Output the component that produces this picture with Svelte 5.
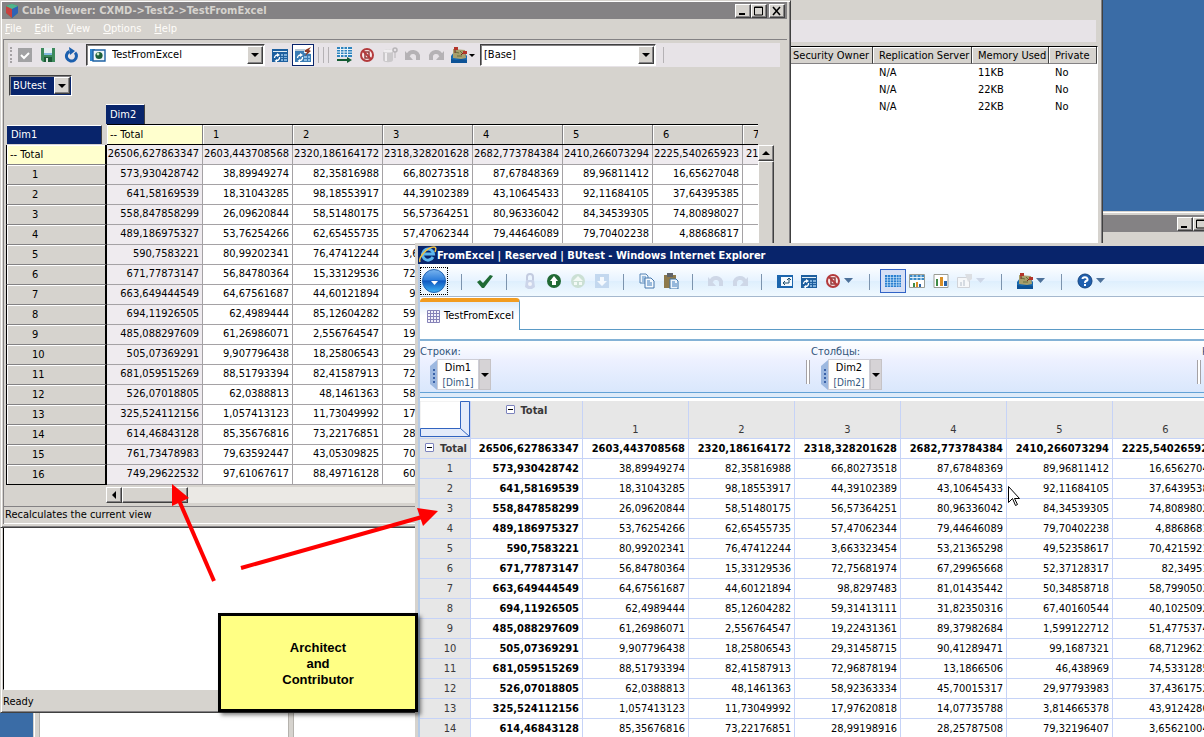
<script>
  const rows = [
    ['26506,627863347', '2603,443708568', '2320,186164172', '2318,328201628', '2682,773784384', '2410,266073294', '2225,540265923'],
    ['573,930428742', '38,89949274', '82,35816988', '66,80273518', '87,67848369', '89,96811412', '16,65627048'],
    ['641,58169539', '18,31043285', '98,18553917', '44,39102389', '43,10645433', '92,11684105', '37,64395385'],
    ['558,847858299', '26,09620844', '58,51480175', '56,57364251', '80,96336042', '84,34539305', '74,80898027'],
    ['489,186975327', '53,76254266', '62,65455735', '57,47062344', '79,44646089', '79,70402238', '4,88686817'],
    ['590,7583221', '80,99202341', '76,47412244', '3,663323454', '53,21365298', '49,52358617', '70,42159214'],
    ['671,77873147', '56,84780364', '15,33129536', '72,75681974', '67,29965668', '52,37128317', '82,349517'],
    ['663,649444549', '64,67561687', '44,60121894', '98,8297483', '81,01435442', '50,34858718', '58,79905031'],
    ['694,11926505', '62,4989444', '85,12604282', '59,31413111', '31,82350316', '67,40160544', '40,10250926'],
    ['485,088297609', '61,26986071', '2,556764547', '19,22431361', '89,37982684', '1,599122712', '51,47753742'],
    ['505,07369291', '9,907796438', '18,25806543', '29,31458715', '90,41289471', '99,1687321', '68,71296215'],
    ['681,059515269', '88,51793394', '82,41587913', '72,96878194', '13,1866506', '46,438969', '74,53312851'],
    ['526,07018805', '62,0388813', '48,1461363', '58,92363334', '45,70015317', '29,97793983', '37,43617529'],
    ['325,524112156', '1,057413123', '11,73049992', '17,97620818', '14,07735788', '3,814665378', '43,91242864'],
    ['614,46843128', '85,35676816', '73,22176851', '28,99198916', '28,25787508', '79,32196407', '3,656210047'],
    ['761,73478983', '79,63592447', '43,05309825', '70,18264935', '', '', ''],
    ['749,29622532', '97,61067617', '88,49716128', '60,93518472', '', '', '']
  ];

  const menus = ['File', 'Edit', 'View', 'Options', 'Help'];

  const servers = [
    { replication: 'N/A', memory: '11KB', priv: 'No' },
    { replication: 'N/A', memory: '22KB', priv: 'No' },
    { replication: 'N/A', memory: '22KB', priv: 'No' }
  ];

  const viewerTools = [
    { icon: 'sheet', label: 'Submit view' },
    { icon: 'stop', label: 'Stop' },
    { icon: 'cylinder', label: 'Data', off: true },
    { icon: 'undo', label: 'Undo', off: true },
    { icon: 'redo', label: 'Redo', off: true }
  ];

  const webGroups = [
    [{ icon: 'tick', label: 'Commit' }],
    [
      { icon: 'lock', label: 'Lock', off: true },
      { icon: 'up', label: 'Take ownership' },
      { icon: 'bounce', label: 'Bounce', off: true },
      { icon: 'down', label: 'Release', off: true }
    ],
    [
      { icon: 'copy', label: 'Copy' },
      { icon: 'paste', label: 'Paste' }
    ],
    [
      { icon: 'undo', label: 'Undo', off: true },
      { icon: 'redo', label: 'Redo', off: true }
    ],
    [
      { icon: 'swap', label: 'Reset view' },
      { icon: 'recalc', label: 'Recalculate' },
      { icon: 'stop', label: 'Suppress zeroes', drop: true }
    ],
    [
      { icon: 'grid', label: 'Grid', active: true },
      { icon: 'gridchart', label: 'Grid and chart' },
      { icon: 'chart', label: 'Chart' },
      { icon: 'charttype', label: 'Chart type', off: true, drop: true }
    ],
    [{ icon: 'map', label: 'Sandbox', drop: true }],
    [{ icon: 'help', label: 'Help', drop: true }]
  ];

  const axes = [
    { title: 'Строки:', dim: 'Dim1' },
    { title: 'Столбцы:', dim: 'Dim2' },
    { title: 'Контекст:', dim: 'BUtest' }
  ];
</script>

{#snippet icon(name)}
  <svg class="icon" viewBox="0 0 16 16" width="16" height="16" aria-hidden="true">
    {#if name === 'save-check'}
      <path d="M1 1h14v14H1z" fill="#a2a2a4" />
      <path d="M4 8l3 3 5-5" stroke="#fff" stroke-width="2" fill="none" />
    {:else if name === 'save'}
      <path d="M1 1h14v14H3l-2-2z" fill="#3d8a5c" />
      <path d="M4 1h8v7H4z" fill="#e4eef0" />
      <path d="M4 10h8v5H4z" fill="#1d5b38" />
      <path d="M6 11h2v4H6z" fill="#dce8e0" />
      <path d="M4 6h8v2H4z" fill="#7fb7dd" />
    {:else if name === 'refresh'}
      <path d="M12 5.6A5 5 0 1 1 6.5 4.5" fill="none" stroke="#1b5fae" stroke-width="3" />
      <path d="M6 0l6 4-5 4z" fill="#1b5fae" />
    {:else if name === 'view'}
      <path d="M0 2h5v12H0z" fill="#2f86cf" />
      <path d="M3 3h12v11H3z" fill="#eef6fa" stroke="#1f62a4" stroke-width="1.4" />
      <circle cx="9" cy="8.5" r="3.6" fill="#1c5f37" />
      <circle cx="8" cy="7" r="1.4" fill="#cfe8c8" />
    {:else if name === 'recalc'}
      <path d="M0 2h16v13H0z" fill="#1d5f9f" />
      <path d="M1 4h14v1H1z" fill="#e3eef4" />
      <path d="M9 7h2v2H9zM12 7h3v2h-3zM9 10h2v1H9zM12 10h3v1h-3zM9 12h2v2H9zM12 12h3v2h-3z" fill="#7fb0da" />
      <path d="M2.500 11a3 3 0 0 1 3-3M7.500 10a3 3 0 0 1-3 3.500" fill="none" stroke="#fff" stroke-width="1.300" />
      <path d="M5 6l3 2-3 2zM5 12v3.500L2.500 14z" fill="#fff" />
    {:else if name === 'autocalc'}
      <path d="M0 2h10l-1 4 7 1v8H0z" fill="#3a7cb4" />
      <path d="M0 2h10v2H0z" fill="#b9cbd8" />
      <path d="M9 9h3v2H9zM13 9h2v2h-2zM9 12h3v2H9zM13 12h2v2h-2z" fill="#8fbde2" />
      <path d="M2.500 11a3 3 0 0 1 3-3M7.500 10a3 3 0 0 1-3 3.500" fill="none" stroke="#fff" stroke-width="1.300" />
      <path d="M5 6l3 2-3 2zM5 12v3.500L2.500 14z" fill="#fff" />
      <path d="M16 0l-6 3v2l2 0-2 4 6-5-2-1z" fill="#8f3b26" />
    {:else if name === 'sheet'}
      <path d="M1 0h15v10H1z" fill="#2e83bd" />
      <path d="M1 2.5h15M1 5h15M1 7.500h15M4.500 0v10M8 0v10M11.500 0v10" stroke="#e8f3fa" stroke-width="1" />
      <path d="M1 13h11" stroke="#135b33" stroke-width="2" />
      <path d="M11 10l5 3-5 3z" fill="#135b33" />
    {:else if name === 'stop'}
      <circle cx="8" cy="8" r="6" fill="#fbeaea" stroke="#b33a3c" stroke-width="2" />
      <path d="M6 5h4v6H6z" fill="none" stroke="#8f3b3b" stroke-width="1.500" />
      <path d="M4 4l8 8" stroke="#b33a3c" stroke-width="2" />
    {:else if name === 'cylinder'}
      <path d="M1 4c0-2 10-2 10 0v9c0 3-10 3-10 0z" fill="#cbc9cb" />
      <path d="M3 6h2v8H3z" fill="#efedef" />
      <ellipse cx="6" cy="4" rx="5" ry="1.500" fill="#efedef" />
      <circle cx="13" cy="3" r="2" fill="none" stroke="#b7b5b7" stroke-width="1.500" />
      <path d="M13 5v6" stroke="#b7b5b7" />
    {:else if name === 'undo'}
      <path d="M3 9a5 4.500 0 0 1 10 1v3" fill="none" stroke="currentColor" stroke-width="4" />
      <path d="M0 4v9h8z" fill="currentColor" />
    {:else if name === 'redo'}
      <path d="M13 9a5 4.500 0 0 0-10 1v3" fill="none" stroke="currentColor" stroke-width="4" />
      <path d="M16 4v9H8z" fill="currentColor" />
    {:else if name === 'map'}
      <path d="M0 9l3-4h10l3 4v7H0z" fill="#1669b0" />
      <path d="M0 12l5 1 5-1 6 1v3H0z" fill="#0d5296" />
      <path d="M2 2l12 1 1 8-5 1-8-1z" fill="#a89f6c" />
      <path d="M4 5l4 1M6 9h5M9 4l2 2" stroke="#67703f" />
      <path d="M3 0h4v3H3zM12 4h4v3h-4z" fill="#b33429" />
      <path d="M4 3v3M12 6l-2 2" stroke="#7b241c" />
    {:else if name === 'tick'}
      <path d="M0 9l3-2 3 3 7-8 3 1-9 12H5z" fill="#1f6b35" />
    {:else if name === 'lock'}
      <path d="M5 7V4a3 3 0 0 1 6 0v3" fill="none" stroke="#c3cbe0" stroke-width="2" />
      <path d="M4 7h8l1 7-3 2H6l-3-2z" fill="#ccd5ea" />
      <circle cx="8" cy="11" r="2" fill="#f2f5fb" />
    {:else if name === 'up'}
      <circle cx="8" cy="8" r="7" fill="#216a35" />
      <path d="M8 3l4 5h-2v4H6V8H4z" fill="#fff" />
    {:else if name === 'bounce'}
      <circle cx="8" cy="8" r="7" fill="#cbe0d4" />
      <path d="M8 3l5 5H3zM4 9h3v3H4zM9 9h3v3H9z" fill="#f3faf6" />
    {:else if name === 'down'}
      <path d="M1 1h14v14H1z" fill="#c3d8ef" />
      <path d="M6 4h4v4h3l-5 5-5-5h3z" fill="#f4f9fe" />
    {:else if name === 'copy'}
      <path d="M1 1h6l2 2v7H1z" fill="#eef5fb" stroke="#5685b6" />
      <path d="M3 4h4M3 6h4M3 8h3" stroke="#4a86c2" />
      <path d="M6 5h6l3 3v7H6z" fill="#f4f9fd" stroke="#4577ac" />
      <path d="M8 8h3M8 10h5M8 12h5" stroke="#3f7cbd" />
    {:else if name === 'paste'}
      <path d="M1 2h12v13H1z" fill="#8d7a4c" />
      <path d="M4 0h6v4H4z" fill="#5f6368" />
      <path d="M7 6h6l2 2v8H7z" fill="#edf4fb" stroke="#3d74ab" />
      <path d="M9 9h3M9 11h5M9 13h5" stroke="#3f7cbd" />
    {:else if name === 'swap'}
      <path d="M0 2h16v13H0z" fill="#1c66ae" />
      <path d="M4 4h11v9H4z" fill="#f6fbff" />
      <path d="M12 5v5H6M8 8l-2 2 2 2M10 7l2-2 2 2" fill="none" stroke="#1d4f6e" />
    {:else if name === 'grid'}
      <path d="M0 2h16v12H0z" fill="#2b7fd0" />
      <path d="M0 4.500h16M0 7h16M0 9.500h16M0 12h16M2.500 2v12M5.500 2v12M8.500 2v12M11.500 2v12M14 2v12" stroke="#d8ecfb" stroke-width=".6" />
    {:else if name === 'gridchart'}
      <path d="M.5 1.500h15v13H.5z" fill="#fff" stroke="#9a9c94" />
      <path d="M1 2h14v5H1z" fill="#3a8ac6" />
      <path d="M1 4.500h14M4 2v5M8 2v5M12 2v5" stroke="#e3f1fa" />
      <path d="M4 10h2v4H4z" fill="#3e8b46" />
      <path d="M7 9h2v5H7z" fill="#d98f25" />
      <path d="M10 11h2v3h-2z" fill="#2964a8" />
    {:else if name === 'chart'}
      <path d="M1 1.500h14v13H1z" fill="#fff" stroke="#9a9c94" />
      <path d="M3 6h2v7H3z" fill="#3e8b46" />
      <path d="M7 4h3v9H7z" fill="#d98f25" />
      <path d="M11 8h3v5h-3z" fill="#2964a8" />
    {:else if name === 'charttype'}
      <path d="M.5 4.500h12v10H.5z" fill="#f6f8fa" stroke="#d0d3d8" />
      <path d="M3 9h2v4H3zM6 7h2v6H6z" fill="#d5dbe2" />
      <path d="M8 1h7v5l-4 3z" fill="#dcdfe3" />
    {:else if name === 'help'}
      <circle cx="8" cy="8" r="7" fill="#1f5fae" stroke="#154580" />
      <path d="M5.500 6a2.500 2 0 1 1 3.500 2q-1 .5-1 2M8 11v2" fill="none" stroke="#fff" stroke-width="2" />
    {/if}
  </svg>
{/snippet}

{#snippet caret()}
  <svg class="caret" viewBox="0 0 9 5" width="9" height="5" aria-hidden="true"><path d="M0 0h9L4.500 5z" fill="currentColor" /></svg>
{/snippet}

{#snippet winButton(kind)}
  <button class="win-btn raised" aria-label={kind}>
    <svg viewBox="0 0 12 10" width="12" height="10" aria-hidden="true">
      {#if kind === 'Minimize'}
        <path d="M2 8h6" stroke="#000" stroke-width="2" />
      {:else if kind === 'Maximize'}
        <path d="M1.500 1v8h8V1zM1 1.500h9" fill="none" stroke="#000" />
      {:else}
        <path d="M2 1l7 8M9 1L2 9" stroke="#000" stroke-width="1.600" />
      {/if}
    </svg>
  </button>
{/snippet}

<div class="desktop">
  <section class="window back-window" aria-label="Background window">
    <header class="titlebar">
      <span class="win-title"></span>
      {@render winButton('Minimize')}
      {@render winButton('Maximize')}
      {@render winButton('Close')}
    </header>
    <div class="panes">
      <div class="pane tree"></div>
      <div class="pane list"></div>
    </div>
  </section>

  <section class="window architect" aria-label="Architect">
    <div class="arch-tools"></div>
    <div class="arch-list">
      <table>
        <colgroup><col class="owner" /><col class="repl" /><col class="mem" /><col class="priv" /></colgroup>
        <thead>
          <tr><th>Security Owner</th><th>Replication Server</th><th>Memory Used</th><th>Private</th></tr>
        </thead>
        <tbody>
          {#each servers as s}
            <tr><td></td><td>{s.replication}</td><td>{s.memory}</td><td>{s.priv}</td></tr>
          {/each}
        </tbody>
      </table>
    </div>
    <footer class="arch-status">Ready</footer>
  </section>

  <section class="window viewer" aria-label="Cube Viewer">
    <header class="titlebar">
      <svg viewBox="0 0 16 16" width="16" height="16" aria-hidden="true">
        <path d="M8 1l6 2v7l-6 5-6-5V3z" fill="#2d9e63" />
        <path d="M2 3l6 2v10l-6-5z" fill="#c8413f" />
        <path d="M8 5l6-2v7l-6 5z" fill="#2f62b5" />
        <path d="M2 3l6-2 6 2-6 3z" fill="#4fb58c" />
      </svg>
      <span class="win-title">Cube Viewer: CXMD->Test2->TestFromExcel</span>
      {@render winButton('Minimize')}
      {@render winButton('Maximize')}
      <span class="gap"></span>
      {@render winButton('Close')}
    </header>
    <nav class="menu">
      {#each menus as m}
        <button><u>{m[0]}</u>{m.slice(1)}</button>
      {/each}
    </nav>

    <div class="viewer-body">
      <div class="viewer-tools">
        <span class="grip"></span>
        <button class="tool" aria-label="Commit">{@render icon('save-check')}</button>
        <button class="tool" aria-label="Save">{@render icon('save')}</button>
        <button class="tool" aria-label="Recalculate">{@render icon('refresh')}</button>
        <div class="combo view-combo">
          {@render icon('view')}
          <select aria-label="View"><option>TestFromExcel</option></select>
          <span class="combo-arrow raised"><i></i></span>
        </div>
        <button class="tool" aria-label="Recalculate view">{@render icon('recalc')}</button>
        <button class="tool pressed" aria-label="Automatic recalculate">{@render icon('autocalc')}</button>
        <span class="bars"><i></i><i></i><i></i></span>
        {#each viewerTools as t}
          <button class="tool" class:off={t.off} aria-label={t.label}>{@render icon(t.icon)}</button>
        {/each}
        <button class="tool map-tool" aria-label="Sandbox">{@render icon('map')}<i class="tri"></i></button>
        <div class="combo base-combo">
          <select aria-label="Sandbox name"><option>[Base]</option></select>
          <span class="combo-arrow raised"><i></i></span>
        </div>
        <span class="bars"><i></i></span>
      </div>

      <div class="combo title-dim">
        <select aria-label="BUtest"><option>BUtest</option></select>
        <span class="combo-arrow raised"><i></i></span>
      </div>

      <button class="dim-btn col-dim">Dim2</button>

      <div class="grid-area">
        <div class="grid-clip">
          <table class="cube">
            <colgroup><col class="head" /><col class="total" />{#each Array(7) as _}<col class="num" />{/each}</colgroup>
            <thead>
              <tr>
                <th class="corner"><button class="dim-btn">Dim1</button></th>
                <th class="yellow">-- Total</th>
                {#each Array(7) as _, i}<th>{i + 1}</th>{/each}
              </tr>
            </thead>
            <tbody>
              {#each rows as row, r}
                <tr class:sum={r === 0}>
                  <th class:yellow={r === 0}>{r === 0 ? '-- Total' : r}</th>
                  {#each row as value}<td>{value}</td>{/each}
                  <td class="cut">{r === 0 ? '21' : ''}</td>
                </tr>
              {/each}
            </tbody>
          </table>
        </div>
        <div class="vscroll">
          <button class="raised" aria-label="Scroll up"><i class="arrow-up"></i></button>
          <span class="thumb raised"></span>
        </div>
      </div>
      <div class="hscroll">
        <button class="raised" aria-label="Scroll left"><i class="arrow-left"></i></button>
        <span class="thumb raised"></span>
      </div>
      <footer class="viewer-status">Recalculates the current view</footer>
    </div>
  </section>

  <section class="browser" aria-label="Windows Internet Explorer">
    <header class="ie-title">
      <svg viewBox="0 0 18 18" width="18" height="18" aria-hidden="true">
        <path d="M14 11a5.500 5.500 0 1 1 .5-3H5" fill="none" stroke="#5cb6ee" stroke-width="3" />
        <path d="M1 16C-1 12 8 1 15 1q3 0 1 5" fill="none" stroke="#f0c040" stroke-width="1.500" />
      </svg>
      <span>FromExcel | Reserved | BUtest - Windows Internet Explorer</span>
    </header>

    <div class="web-tools">
      <button class="orb" aria-label="Menu">
        <svg viewBox="0 0 24 24" width="24" height="24" aria-hidden="true">
          <defs>
            <linearGradient id="orb" x1="0" y1="0" x2="0" y2="1">
              <stop offset="0" stop-color="#79b4ee" />
              <stop offset=".45" stop-color="#2f7fdc" />
              <stop offset=".5" stop-color="#0f58c0" />
              <stop offset="1" stop-color="#3fb4f6" />
            </linearGradient>
          </defs>
          <circle cx="12" cy="12" r="11.500" fill="url(#orb)" stroke="#2566b4" />
          <path d="M9 12h7l-3.500 4z" fill="#fff" />
        </svg>
      </button>
      {#each webGroups as group}
        <span class="sep"></span>
        {#each group as t}
          <button class="tool" class:off={t.off} class:active={t.active} class:drop={t.drop} aria-label={t.label}>
            {@render icon(t.icon)}{#if t.drop}{@render caret()}{/if}
          </button>
        {/each}
      {/each}
    </div>

    <div class="tabs">
      <button class="tab">
        <svg viewBox="0 0 13 13" width="13" height="13" aria-hidden="true">
          <path d="M.5.5h12v12H.5zM.5 3.500h12M.5 6.500h12M.5 9.500h12M3.500.5v12M6.500.5v12M9.500.5v12" fill="#f4f2fb" stroke="#8683b8" />
        </svg>
        TestFromExcel
      </button>
    </div>

    <div class="axes">
      {#each axes as axis}
        <div class="axis">
          <span class="axis-title">{axis.title}</span>
          <div class="axis-item">
            <svg viewBox="0 0 7 30" width="7" height="30" aria-hidden="true">
              <path d="M7 0v30L0 24V6z" fill="#9db8e0" />
              <path d="M3 9h2v2H3zM3 13h2v2H3zM3 17h2v2H3zM3 21h2v2H3z" fill="#3a62a8" />
            </svg>
            <div class="axis-name"><span>{axis.dim}</span><small>[{axis.dim}]</small></div>
            <button aria-label="{axis.dim} subset"><i class="arrow-down"></i></button>
          </div>
          <span class="splitter"></span>
        </div>
      {/each}
    </div>
    <div class="axes-edge"></div>

    <table class="web-grid">
      <colgroup><col class="head" /><col class="total" />{#each Array(6) as _}<col class="num" />{/each}</colgroup>
      <thead>
        <tr>
          <th class="corner">
            <svg viewBox="0 0 50 37" width="50" height="37" aria-hidden="true">
              <path d="M.5.5h40v27H.5z" fill="#fff" />
              <path d="M40.500.5h9v35H.5v-8h40z" fill="#e4ebfa" stroke="#3264c0" />
              <path d="M40.500 27.500l9 8" stroke="#3264c0" />
            </svg>
          </th>
          <th class="top"><button class="minus" aria-label="Collapse Total"></button>Total</th>
          {#each Array(6) as _, i}<th>{i + 1}</th>{/each}
        </tr>
      </thead>
      <tbody>
        {#each rows.slice(0, 15) as row, r}
          <tr class:sum={r === 0}>
            <th>{#if r === 0}<button class="minus" aria-label="Collapse row Total"></button>Total{:else}{r}{/if}</th>
            {#each row as value}<td>{value}</td>{/each}
          </tr>
        {/each}
      </tbody>
    </table>
  </section>

  <svg class="arrows" viewBox="0 0 280 110" width="280" height="110" aria-hidden="true">
    <g stroke="#f00" stroke-width="4" fill="none">
      <path d="M54 101L18 18" />
      <path d="M81 88L262 37" />
    </g>
    <path d="M12 4l17 14-17 8zM278 31l-21-3 6 18z" fill="#f00" />
  </svg>

  <aside class="callout">Architect<br />and<br />Contributor</aside>

  <svg class="cursor" viewBox="0 0 12 21" width="12" height="21" aria-hidden="true">
    <path d="M.5.5v16l4-4 3 7 2-1-3-6h5z" fill="#fff" stroke="#000" />
  </svg>
</div>

<style>
  :global(body) {
    margin: 0;
  }

  .desktop {
    position: relative;
    height: 100vh;
    overflow: hidden;
    background: #3a6ca6;
    font-family: 'DejaVu Sans Condensed', 'DejaVu Sans', Tahoma, sans-serif;
    font-size: 11px;
    line-height: 14px;
    color: #000;
  }

  button,
  select {
    font: inherit;
    color: inherit;
    margin: 0;
    padding: 0;
    border: 0;
    background: none;
    border-radius: 0;
  }

  svg {
    display: block;
    flex-shrink: 0;
  }

  table {
    border-collapse: separate;
    border-spacing: 0;
    table-layout: fixed;
  }

  th,
  td {
    box-sizing: border-box;
    padding: 0;
    font-weight: normal;
    white-space: nowrap;
    overflow: hidden;
  }

  /* ── Classic window chrome ── */
  .window {
    position: absolute;
    display: flex;
    flex-direction: column;
    box-sizing: border-box;
    background: #d6d3ce;
    border: 1px solid;
    border-color: #d6d3ce #404040 #404040 #d6d3ce;
    box-shadow: inset 1px 1px #fff, inset -1px -1px #848284;
  }

  .raised {
    box-sizing: border-box;
    background: #d6d3ce;
    border: 1px solid;
    border-color: #fff #404040 #404040 #fff;
    box-shadow: inset -1px -1px #848284;
  }

  .titlebar {
    display: flex;
    align-items: center;
    height: 17px;
    padding: 0 2px;
    background: #848284;
    color: #d6d3ce;
    font-weight: bold;
  }

  .win-title {
    flex: 1;
    padding-left: 2px;
    white-space: nowrap;
  }

  .win-btn {
    display: flex;
    align-items: center;
    justify-content: center;
    width: 16px;
    height: 14px;
  }

  .gap {
    width: 2px;
  }

  /* ── Window at the very back ── */
  .back-window {
    top: 211px;
    left: 33px;
    right: -27px;
    bottom: -20px;
    padding: 3px;
  }

  .panes {
    flex: 1;
    display: flex;
    gap: 4px;
    padding: 20px 2px 0;
  }

  .pane {
    background: #fff;
    border: 1px solid #b5b2ad;
  }

  .tree {
    width: 248px;
  }

  .list {
    flex: 1;
  }

  /* ── Architect ── */
  .architect {
    top: -2px;
    left: 0;
    right: 101px;
    height: 715px;
    padding: 21px 4px 0 2px;
  }

  .arch-tools {
    height: 22px;
    margin-right: 2px;
    background: #e7e3e7;
  }

  .arch-list {
    flex: 1;
    display: flex;
    justify-content: flex-end;
    align-items: flex-start;
    margin-top: 4px;
    border: 1px solid;
    border-color: #000 #fff #fff #000;
    background: #fff;
  }

  .arch-list table {
    width: 310px;
  }

  .arch-list th {
    height: 17px;
    padding: 1px 0 0 6px;
    text-align: left;
    background: #d6d3ce;
    border-right: 1px solid #404040;
    border-bottom: 1px solid #848284;
    box-shadow: inset 1px 1px #fff;
  }

  .arch-list td {
    height: 17px;
    padding-left: 6px;
  }

  .owner {
    width: 86px;
  }

  .repl {
    width: 99px;
  }

  .mem {
    width: 77px;
  }

  .priv {
    width: 48px;
  }

  .arch-status {
    height: 22px;
    line-height: 24px;
  }

  /* ── Cube viewer ── */
  .viewer {
    top: 0;
    left: 0;
    width: 791px;
    padding: 1px 3px 3px 1px;
  }

  .menu {
    display: flex;
    gap: 13px;
    height: 20px;
    padding-left: 3px;
    color: #fffdfa;
  }

  .viewer-body {
    border-top: 1px solid #848284;
    border-left: 1px solid #848284;
    margin-left: 1px;
    padding: 3px 0 0 2px;
  }

  .viewer-tools {
    display: flex;
    align-items: center;
    gap: 7px;
    height: 24px;
    margin: 0 7px 0 2px;
    padding-left: 2px;
    background: #e7e3e7;
  }

  .grip {
    width: 2px;
    height: 16px;
    margin-right: -4px;
    border-left: 2px dotted #a5a2a5;
  }

  .tool {
    position: relative;
    display: flex;
    align-items: center;
    flex-shrink: 0;
    width: 16px;
    color: #8c8c8c;
  }

  .viewer-tools .off {
    color: #b5b2b5;
  }

  .pressed {
    width: 22px;
    height: 22px;
    margin: 0 -3px;
    box-sizing: border-box;
    justify-content: center;
    background: #fff;
    border: 1px solid #08246b;
  }

  .bars {
    display: flex;
    gap: 4px;
    width: 11px;
  }

  .bars i {
    width: 1px;
    height: 16px;
    background: #b5b2b5;
  }

  .map-tool {
    width: 22px;
    gap: 2px;
  }

  .tri,
  .arrow-down,
  .combo-arrow i {
    flex-shrink: 0;
    border: 3px solid transparent;
    border-top: 3px solid #000;
    border-bottom: 0;
  }

  .combo-arrow i,
  .arrow-down {
    border-width: 4px 4px 0;
  }

  .combo {
    display: flex;
    align-items: center;
    box-sizing: border-box;
    flex-shrink: 0;
    height: 22px;
    padding: 1px;
    background: #fff;
    border: 1px solid;
    border-color: #404040 #fff #fff #404040;
    box-shadow: inset 1px 1px #848284;
  }

  .combo select {
    appearance: none;
    flex: 1;
    min-width: 0;
    height: 100%;
  }

  .combo-arrow {
    display: flex;
    align-items: center;
    justify-content: center;
    width: 16px;
    height: 100%;
    margin-left: -16px;
    pointer-events: none;
  }

  .view-combo {
    width: 179px;
    padding-left: 3px;
  }

  .view-combo select {
    padding-left: 6px;
  }

  .base-combo {
    width: 176px;
  }

  .base-combo select {
    padding-left: 2px;
  }

  .title-dim {
    width: 63px;
    height: 21px;
    margin: 8px 0 8px 3px;
    background: #08246b;
    color: #fff;
  }

  .title-dim select {
    padding-left: 2px;
  }

  .dim-btn {
    box-sizing: border-box;
    height: 19px;
    padding: 0 4px;
    text-align: left;
    color: #fff;
    background: #08246b;
    border-top: 1px solid #fff;
    border-right: 1px solid #404040;
  }

  .col-dim {
    display: block;
    height: 20px;
    width: 39px;
    margin-left: 100px;
  }

  .grid-area {
    display: flex;
    margin-right: 13px;
  }

  .grid-clip {
    flex: 1;
    min-width: 0;
    overflow: hidden;
    padding-bottom: 2px;
  }

  .cube {
    width: 827px;
  }

  .head {
    width: 101px;
  }

  .total {
    width: 96px;
  }

  .num {
    width: 90px;
  }

  .cube th {
    height: 20px;
    padding-top: 1px;
    text-align: left;
    background: #d6d3ce;
  }

  .cube thead th {
    height: 21px;
    padding-left: 10px;
    border: solid #000;
    border-width: 1px 0;
    box-shadow: inset -1px 0 #848284, inset 1px 1px #fff;
  }

  .cube thead .corner {
    padding: 0 5px 0 1px;
    border-color: transparent;
    box-shadow: none;
  }

  .corner .dim-btn {
    display: block;
    width: 95px;
  }

  .cube tbody th {
    padding-left: 25px;
    border-left: 1px solid #000;
    border-right: 2px solid #000;
    border-bottom: 1px solid #848284;
    box-shadow: inset 1px 1px #fff;
  }

  .cube tbody tr:last-child th {
    border-bottom-color: #000;
  }

  .cube thead .yellow,
  .cube tbody .yellow {
    padding-left: 3px;
    background: #ffffce;
  }

  .cube td {
    height: 20px;
    padding: 0 3px 2px 0;
    text-align: right;
    background: #fff;
    border-right: 1px solid #a5a2a5;
    border-bottom: 1px solid #a5a2a5;
  }

  .cube .sum td,
  .cube td:nth-child(2) {
    background: #efebef;
  }

  .cube .cut {
    padding-left: 3px;
    text-align: left;
  }

  .vscroll {
    width: 16px;
    margin-top: 21px;
    background: #ebe9e5;
  }

  .vscroll button,
  .hscroll button {
    display: flex;
    align-items: center;
    justify-content: center;
    width: 16px;
    height: 16px;
  }

  .vscroll .thumb {
    display: block;
    height: 200px;
  }

  .arrow-up {
    border: 4px solid transparent;
    border-top: 0;
    border-bottom-color: #000;
  }

  .arrow-left {
    border: 4px solid transparent;
    border-left: 0;
    border-right-color: #000;
  }

  .hscroll {
    display: flex;
    margin: 0 29px 0 100px;
    background: #ebe9e5;
  }

  .hscroll .thumb {
    width: 66px;
  }

  .viewer-status {
    height: 16px;
    margin: 3px 0 0 -2px;
    border-top: 1px solid #848284;
    border-bottom: 1px solid #fff;
    padding-left: 1px;
    line-height: 15px;
  }

  /* ── Browser window ── */
  .browser {
    position: absolute;
    top: 243px;
    left: 415px;
    right: 0;
    bottom: 0;
    overflow: hidden;
    background: #fff;
    border: solid #d6d3ce;
    border-width: 3px 0 0 3px;
    padding-left: 2px;
    box-shadow: inset 2px 0 #b5cbe7;
  }

  .ie-title {
    display: flex;
    align-items: center;
    height: 18px;
    margin-left: -2px;
    padding-left: 1px;
    background: #08246b;
    color: #fff;
    font-weight: bold;
    white-space: nowrap;
  }

  .ie-title span {
    padding-top: 1px;
  }

  .web-tools {
    display: flex;
    align-items: center;
    gap: 8px;
    height: 33px;
    background: linear-gradient(#fff, #e7f3ff 50%, #deeffd 52%, #f2faff);
    box-shadow: inset 0 -1px #a5b8ce;
  }

  .orb {
    display: flex;
    align-items: center;
    justify-content: center;
    flex-shrink: 0;
    box-sizing: border-box;
    width: 28px;
    height: 28px;
    border: 1px dotted #000;
  }

  .sep {
    flex-shrink: 0;
    width: 1px;
    height: 16px;
    margin: 2px 7px 0 5px;
    background: #7c94ae;
  }

  .web-tools .tool {
    color: #4d719a;
  }

  .web-tools .off {
    color: #ced7e7;
  }

  .web-tools .drop {
    width: 31px;
    gap: 3px;
  }

  .web-tools .active {
    justify-content: center;
    box-sizing: border-box;
    width: 26px;
    height: 24px;
    margin: 0 -5px;
    background: #d6dff5;
    border: 1px solid #3163c6;
  }

  .tabs {
    display: flex;
    height: 32px;
    padding-top: 1px;
    background: linear-gradient(#5a9ac6, #5a9ac6) 0 100% / 100% 1px no-repeat;
  }

  .tab {
    display: flex;
    align-items: center;
    gap: 4px;
    box-sizing: border-box;
    width: 100px;
    padding-left: 7px;
    background: linear-gradient(#dcebfa, #fff 14px);
    border-top: 4px solid #f29c1f;
    border-right: 1px solid #5a9ac6;
    border-radius: 4px 4px 0 0;
  }

  .axes {
    display: flex;
    height: 51px;
    margin-top: 9px;
    border-top: 2px solid #84b2d6;
    border-bottom: 1px solid #63a2d6;
    background: linear-gradient(#fff, #ecf0ff 40%, #d9e7fc);
    overflow: hidden;
  }

  .axis {
    position: relative;
    flex: 0 0 391px;
    padding-top: 4px;
    box-sizing: border-box;
  }

  .axis-title {
    display: block;
    color: #31557b;
  }

  .axis-item {
    display: flex;
    align-items: center;
    height: 31px;
    margin-left: 10px;
  }

  .axis-name {
    display: flex;
    flex-direction: column;
    align-items: center;
    box-sizing: border-box;
    width: 42px;
    height: 31px;
    padding-top: 1px;
    background: #fff;
    border: 1px solid #ceced6;
  }

  .axis-name small {
    font-size: 10px;
    line-height: 15px;
    color: #31557b;
  }

  .axis-item button {
    display: flex;
    align-items: center;
    justify-content: center;
    width: 12px;
    height: 31px;
    background: #d6d3d6;
    border: 1px solid #c6c3c6;
    box-sizing: border-box;
  }

  .splitter {
    position: absolute;
    right: 1px;
    bottom: 8px;
    width: 2px;
    height: 24px;
    background: #fff;
    border: 1px solid #a5a2a5;
    border-width: 0 1px;
  }

  .axes-edge {
    height: 4px;
    margin-bottom: 3px;
    background: #deebf9;
    border-bottom: 1px solid #63a2d6;
  }

  .web-grid {
    width: 799px;
  }

  .web-grid .head {
    width: 51px;
  }

  .web-grid .total {
    width: 112px;
  }

  .web-grid .num {
    width: 106px;
  }

  .web-grid th,
  .web-grid td {
    height: 20px;
    border-right: 1px solid #c6d3f7;
    border-bottom: 1px solid #c6d3f7;
  }

  .web-grid th {
    background: #e7e7e7;
    color: #393839;
  }

  .web-grid thead th {
    height: 37px;
    padding-bottom: 1px;
    vertical-align: bottom;
    text-align: center;
  }

  .web-grid thead .corner {
    padding: 0;
    vertical-align: top;
  }

  .web-grid thead .top {
    vertical-align: top;
    padding: 3px 0 0;
    font-weight: bold;
  }

  .web-grid td {
    padding: 1px 3px 0 0;
    text-align: right;
  }

  .web-grid tbody th {
    padding: 1px 0 0 10px;
    text-align: center;
  }

  .web-grid tbody .sum th,
  .web-grid .sum th {
    padding: 1px 3px 0 0;
    text-align: right;
  }

  .web-grid .sum th,
  .web-grid .sum td,
  .web-grid td:nth-child(2) {
    font-weight: bold;
  }

  .minus {
    box-sizing: border-box;
    width: 9px;
    height: 9px;
    margin-right: 6px;
    vertical-align: 1px;
    background: linear-gradient(#000, #000) 50% 50% / 5px 1px no-repeat #fff;
    border: 1px solid #7b82bd;
    border-radius: 1px;
  }

  /* ── Annotation layer ── */
  .arrows {
    position: absolute;
    top: 480px;
    left: 160px;
  }

  .callout {
    position: absolute;
    top: 613px;
    left: 218px;
    display: flex;
    align-items: center;
    justify-content: center;
    box-sizing: border-box;
    width: 200px;
    height: 99px;
    padding-top: 2px;
    background: #ffff84;
    border: 3px solid #000;
    box-shadow: 3px 3px 4px rgba(0, 0, 0, 0.5);
    font: bold 13px/16px 'Liberation Sans', Arial, sans-serif;
    text-align: center;
  }

  .cursor {
    position: absolute;
    top: 486px;
    left: 1008px;
  }
</style>
